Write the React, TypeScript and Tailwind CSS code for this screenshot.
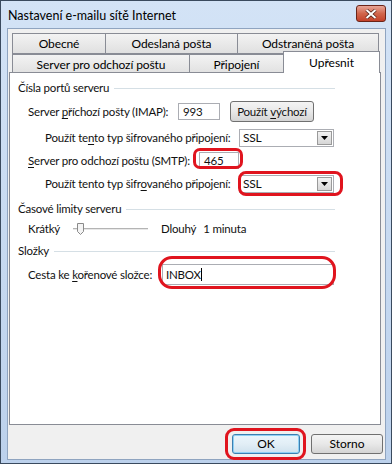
import React from "react";

const font = { fontFamily: 'Lato, "Liberation Sans", Arial, sans-serif' };

const Tab = ({ label, w, first }: { label: string; w: number; first?: boolean }) => (
  <div
    className={`h-[20px] flex items-center justify-center border border-[#898c95] border-b-0 bg-gradient-to-b from-[#f3f3f3] to-[#e0e0e0] text-[12px] tracking-[-0.1px] text-black ${first ? "" : "-ml-px"}`}
    style={{ width: w }}
  >
    {label}
  </div>
);

const GroupHeader = ({ label, w }: { label: string; w: number }) => (
  <div className="ml-[8px] flex items-center h-[14px]" style={{ width: w }}>
    <span className="mr-[5px] whitespace-nowrap">{label}</span>
    <div className="flex-1 h-px bg-[#d5dfe5]" />
  </div>
);

const Select = ({ value }: { value: string }) => (
  <div className="shrink-0 w-[95px] h-[18px] border border-[#abadb3] bg-white flex items-center justify-between pl-[3px]">
    <span className="text-[12px]">{value}</span>
    <div className="w-[15px] h-[14px] mr-px border border-[#9a9a9a] bg-gradient-to-b from-[#f2f2f2] to-[#d6d6d6] flex items-center justify-center">
      <svg width="7" height="4" viewBox="0 0 7 4">
        <path d="M0 0h7L3.5 4z" fill="#000" />
      </svg>
    </div>
  </div>
);

const Ring = ({ className }: { className: string }) => (
  <div className={`absolute border-[3px] border-[#e0141e] pointer-events-none ${className}`} />
);

const U = ({ children }: { children: React.ReactNode }) => (
  <span className="underline underline-offset-[2px]">{children}</span>
);

export default function App() {
  return (
    <div
      className="w-[392px] h-[464px] border border-[#3a4a5e] bg-gradient-to-b from-[#d3e3f6] to-[#bcd1ec] flex flex-col select-none"
      style={font}
    >
      {/* title bar */}
      <div className="h-[27px] flex items-start justify-between pl-[7px] pr-[5px]">
        <span className="mt-[6px] text-[12.5px] text-black">Nastavení e-mailu sítě Internet</span>
        <div className="mt-[4px] w-[30px] h-[17px] rounded-[3px] border border-[#6b2418] bg-gradient-to-b from-[#e7a597] via-[#d1664c] to-[#c3412a] flex items-center justify-center">
          <svg width="12" height="10" viewBox="0 0 12 10">
            <path d="M1.5 1l9 8M10.5 1l-9 8" stroke="#4a1a12" strokeWidth="3.4" />
            <path d="M1.5 1l9 8M10.5 1l-9 8" stroke="#fff" strokeWidth="2" />
          </svg>
        </div>
      </div>

      {/* client area */}
      <div className="ml-[6px] mr-[5px] h-[432px] border border-[#8fa4c0] bg-[#f0f0f0] flex flex-col">
        {/* tabs row 1 */}
        <div className="mt-[4px] ml-[4px] flex">
          <Tab label="Obecné" w={94} first />
          <Tab label="Odeslaná pošta" w={133} />
          <Tab label="Odstraněná pošta" w={142} />
        </div>
        {/* tabs row 2 */}
        <div className="ml-[4px] flex items-end h-[19px]">
          <div className="flex border-t border-[#898c95] h-[19px]">
            <Tab label="Server pro odchozí poštu" w={178} first />
            <Tab label="Připojení" w={95} />
          </div>
          <div className="-ml-px relative z-10 w-[97px] h-[22px] -mb-px border border-[#898c95] border-b-0 bg-white flex justify-center pt-[2px] text-[12px] text-black">
            Upřesnit
          </div>
        </div>

        {/* panel */}
        <div className="relative ml-px w-[372px] h-[353px] border border-[#898c95] bg-white flex flex-col text-[11.5px] tracking-[-0.2px] text-[#111]">
          <div className="mt-[8px]">
            <GroupHeader label="Čísla portů serveru" w={317} />
          </div>

          <div className="mt-[6px] h-[21px] flex items-center">
            <span className="shrink-0 ml-[18px] w-[150px] whitespace-nowrap">
              Server <U>p</U>říchozí pošty (IMAP):
            </span>
            <div className="shrink-0 w-[42px] h-[17px] border border-[#abadb3] bg-white flex items-center pl-[4px]">993</div>
            <div className="shrink-0 ml-[10px] w-[84px] h-[21px] rounded-[3px] border border-[#707070] bg-gradient-to-b from-[#f4f4f4] via-[#e8e8e8] to-[#d4d4d4] flex items-center justify-center whitespace-nowrap">
              Použít&nbsp;<U>v</U>ýchozí
            </div>
          </div>

          <div className="mt-[7px] h-[18px] flex items-center">
            <span className="shrink-0 ml-[35px] w-[194px] whitespace-nowrap">
              Použít te<U>n</U>to typ šifrovaného připojení:
            </span>
            <Select value="SSL" />
          </div>

          <div className="mt-[5px] h-[17px] flex items-center">
            <span className="shrink-0 ml-[18px] w-[171px] whitespace-nowrap">
              <U>S</U>erver pro odchozí poštu (SMTP):
            </span>
            <div className="shrink-0 w-[40px] h-[17px] border border-[#abadb3] bg-white flex items-center pl-[4px]">465</div>
          </div>

          <div className="mt-[6px] h-[18px] flex items-center">
            <span className="shrink-0 ml-[35px] w-[194px] whitespace-nowrap">
              Použít tento typ šifr<U>o</U>vaného připojení:
            </span>
            <Select value="SSL" />
          </div>

          <div className="mt-[9px]">
            <GroupHeader label={"Časové limity serveru"} w={317} />
          </div>
          <div className="mt-[5px] h-[16px] flex items-center">
            <span className="shrink-0 ml-[18px] w-[45px]">Krátký</span>
            <svg width="76" height="14" viewBox="0 0 76 14" className="shrink-0">
              <rect x="0" y="6" width="75" height="1" fill="#b4b4b4" />
              <rect x="0" y="7" width="75" height="1" fill="#e8e8e8" />
              <path d="M4.5 1.5h6v8l-3 3l-3-3z" fill="#f4f4f4" stroke="#8a8a8a" />
            </svg>
            <span className="ml-[12px]">Dlouhý</span>
            <span className="ml-[7px]">1 minuta</span>
          </div>

          <div className="mt-[7px]">
            <GroupHeader label="Složky" w={317} />
          </div>
          <div className="mt-[6px] h-[21px] flex items-center">
            <span className="shrink-0 ml-[18px] w-[134px] whitespace-nowrap">
              Cesta ke <U>k</U>ořenové složce:
            </span>
            <div className="shrink-0 w-[172px] h-[21px] border border-[#abadb3] bg-white flex items-center pl-[3px]">
              INBOX<span className="w-px h-[13px] bg-black" />
            </div>
          </div>

          <Ring className="left-[183px] top-[75px] w-[50px] h-[21px] rounded-[7px]" />
          <Ring className="left-[228px] top-[98px] w-[105px] h-[25px] rounded-[8px]" />
          <Ring className="left-[148px] top-[183px] w-[178px] h-[33px] rounded-[14px]" />
        </div>

        {/* buttons */}
        <div className="mt-[9px] flex justify-end gap-[11px] mr-[2px] text-[12px] text-black">
          <div className="relative">
            <div className="w-[68px] h-[20px] rounded-[3px] border border-[#3c7fb1] bg-gradient-to-b from-[#eaf6fd] via-[#e2eef6] to-[#cfe2ee] flex items-center justify-center shadow-[inset_0_0_0_1px_#8ed0f4]">
              OK
            </div>
            <div className="absolute -left-[7px] -top-[6px] w-[81px] h-[32px] rounded-[9px] border-[3px] border-[#e0141e]" />
          </div>
          <div className="w-[72px] h-[20px] rounded-[3px] border border-[#707070] bg-gradient-to-b from-[#f4f4f4] via-[#e8e8e8] to-[#d4d4d4] flex items-center justify-center">
            Storno
          </div>
        </div>
      </div>
    </div>
  );
}
